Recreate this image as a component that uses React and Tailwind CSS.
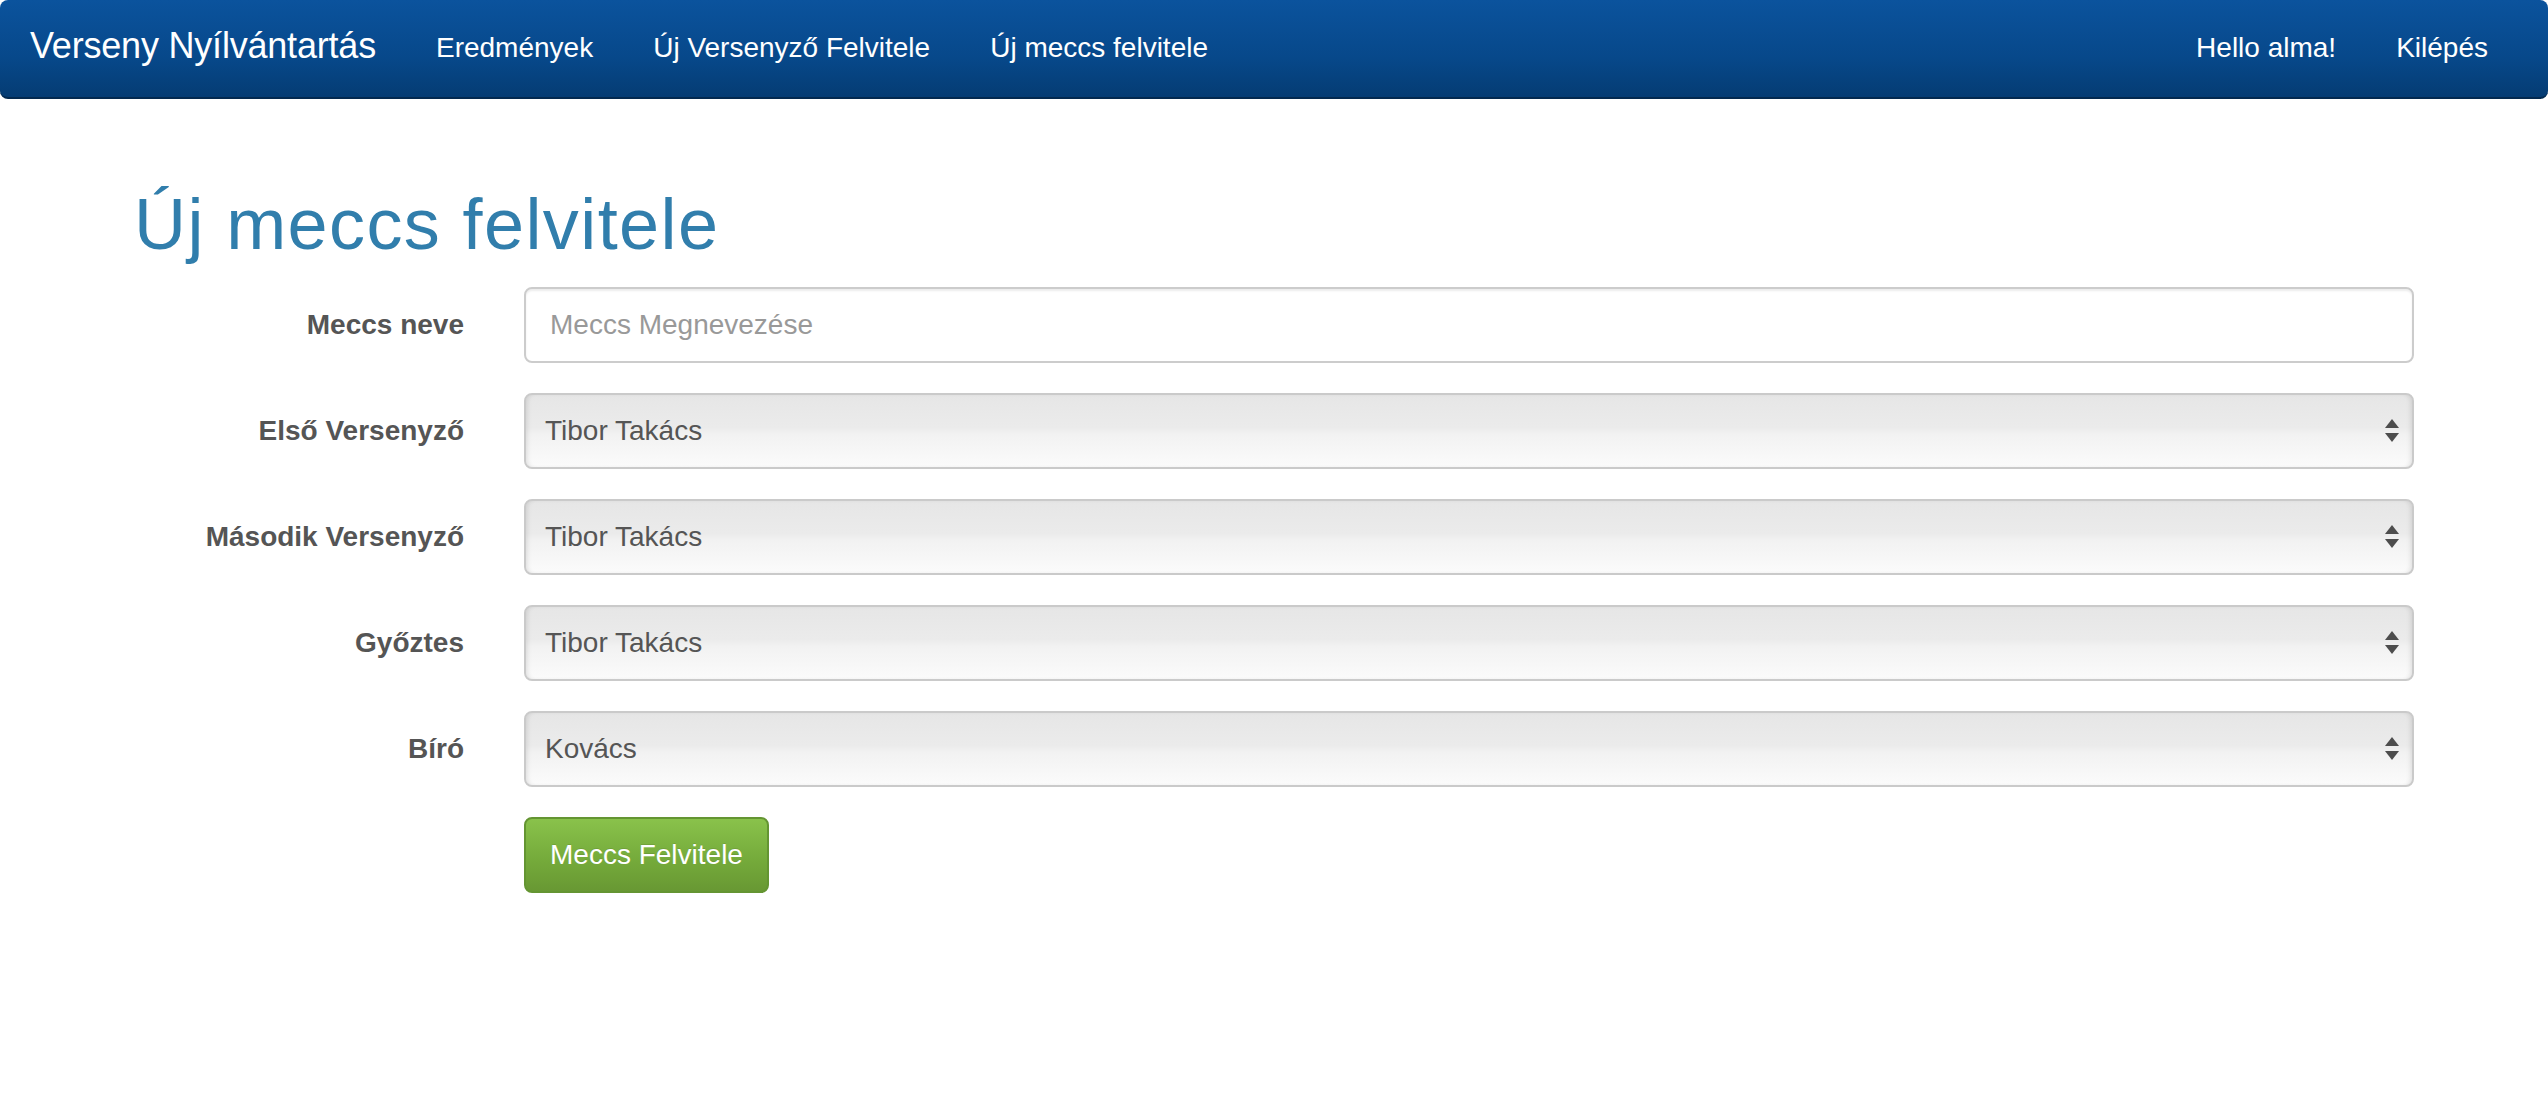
import React from 'react'

const font = { fontFamily: '"Liberation Sans", Arial, sans-serif' }

const navLinks = ['Eredmények', 'Új Versenyző Felvitele', 'Új meccs felvitele']

const SelectArrows = () => (
  <svg width="14" height="24" viewBox="0 0 14 24" className="shrink-0">
    <polygon points="7,0 14,9 0,9" fill="#4d4d4d" />
    <polygon points="0,14 14,14 7,23" fill="#4d4d4d" />
  </svg>
)

const FakeSelect = ({ value }) => (
  <div
    className="h-[76px] w-full flex items-center justify-between pl-[19px] pr-[13px] rounded-[8px] border-2 border-[#cacaca]
               bg-[linear-gradient(to_bottom,#e6e6e6,#ebebeb_45%,#f2f2f2_55%,#fbfbfb)]
               shadow-[inset_4px_0_5px_-3px_rgba(0,0,0,0.12),inset_-4px_0_5px_-3px_rgba(0,0,0,0.12)]
               text-[28px] text-[#555]"
  >
    <span>{value}</span>
    <SelectArrows />
  </div>
)

const FormRow = ({ label, children }) => (
  <div className="flex items-center -mx-[30px] mb-[30px]">
    <label className="w-[390px] px-[30px] text-right text-[28px] font-bold text-[#555]">{label}</label>
    <div className="flex-1 px-[30px]">{children}</div>
  </div>
)

const App = () => {
  return (
    <div className="min-h-screen bg-white" style={font}>
      {/* Navbar */}
      <nav className="h-[99px] rounded-[8px] border-b-2 border-[#03294f] bg-[linear-gradient(to_bottom,#0b539d,#07488a_60%,#053c73)] flex items-center justify-between px-[30px] text-white">
        <div className="flex items-center">
          <a className="text-[36px] pr-[30px] -mt-[5px] tracking-[-0.2px]">Verseny Nyílvántartás</a>
          {navLinks.map((l) => (
            <a key={l} className="text-[28px] px-[30px] -mt-[1px]">
              {l}
            </a>
          ))}
        </div>
        <div className="flex items-center">
          <a className="text-[28px] px-[30px] -mt-[2px]">Hello alma!</a>
          <a className="text-[28px] px-[30px] -mt-[2px]">Kilépés</a>
        </div>
      </nav>

      {/* Content */}
      <div className="mx-auto w-[2340px] px-[30px]">
        <h1 className="text-[72px] leading-[1.1] text-[#317eac] mt-[86px] mb-[23px] tracking-[1.4px]">Új meccs felvitele</h1>

        <form>
          <FormRow label="Meccs neve">
            <div className="h-[76px] w-full flex items-center px-[24px] rounded-[8px] border-2 border-[#cccccc] shadow-[inset_0_2px_2px_rgba(0,0,0,0.075)] text-[28px] text-[#999]">
              Meccs Megnevezése
            </div>
          </FormRow>
          <FormRow label="Első Versenyző">
            <FakeSelect value="Tibor Takács" />
          </FormRow>
          <FormRow label="Második Versenyző">
            <FakeSelect value="Tibor Takács" />
          </FormRow>
          <FormRow label="Győztes">
            <FakeSelect value="Tibor Takács" />
          </FormRow>
          <FormRow label="Bíró">
            <FakeSelect value="Kovács" />
          </FormRow>
          <div className="flex -mx-[30px]">
            <div className="w-[390px] px-[30px]" />
            <div className="flex-1 px-[30px]">
              <button
                type="button"
                className="h-[76px] px-[24px] rounded-[8px] border-2 border-[#649532] bg-[linear-gradient(to_bottom,#89c24b,#74a93a_60%,#689833)] text-white text-[28px] [text-shadow:0_-1px_0_rgba(0,0,0,0.1)]"
              >
                Meccs Felvitele
              </button>
            </div>
          </div>
        </form>
      </div>
    </div>
  )
}

export default App
